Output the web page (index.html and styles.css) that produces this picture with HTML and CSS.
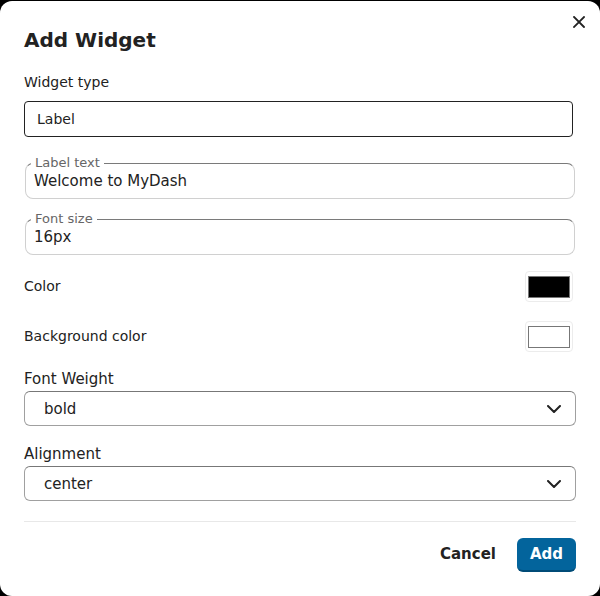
FILE: index.html
```html
<!DOCTYPE html>
<html lang="en">
<head>
<meta charset="utf-8">
<title>Add Widget</title>
<link rel="stylesheet" href="styles.css">
</head>
<body>
<div class="dialog" role="dialog" aria-labelledby="dlg-title">
  <button class="close" aria-label="Close">
    <svg width="12" height="12" viewBox="0 0 12 12"><path d="M1 1 L11 11 M11 1 L1 11" stroke="#222" stroke-width="1.8" stroke-linecap="square" fill="none"/></svg>
  </button>
  <h2 class="title" id="dlg-title">Add Widget</h2>
  <div class="form">
    <div class="field-label">Widget type</div>
    <div class="type-box">Label</div>

    <fieldset class="outlined first">
      <legend>Label text</legend>
      <input class="outlined-input" type="text" value="Welcome to MyDash">
    </fieldset>

    <fieldset class="outlined second">
      <legend>Font size</legend>
      <input class="outlined-input" type="text" value="16px">
    </fieldset>

    <div class="color-row first-color">
      <span class="row-label">Color</span>
      <span class="swatch-box"><span class="swatch swatch-black"></span></span>
    </div>
    <div class="color-row second-color">
      <span class="row-label">Background color</span>
      <span class="swatch-box"><span class="swatch swatch-white"></span></span>
    </div>

    <div class="group first-group">
      <div class="group-label">Font Weight</div>
      <div class="select">
        <span>bold</span>
        <svg width="14" height="8" viewBox="0 0 14 8"><path d="M1 1 L7 7 L13 1" stroke="#222" stroke-width="2" fill="none" stroke-linecap="round" stroke-linejoin="round"/></svg>
      </div>
    </div>
    <div class="group second-group">
      <div class="group-label">Alignment</div>
      <div class="select">
        <span>center</span>
        <svg width="14" height="8" viewBox="0 0 14 8"><path d="M1 1 L7 7 L13 1" stroke="#222" stroke-width="2" fill="none" stroke-linecap="round" stroke-linejoin="round"/></svg>
      </div>
    </div>
  </div>
  <div class="footer">
    <button class="btn btn-cancel">Cancel</button>
    <button class="btn btn-add">Add</button>
  </div>
</div>
</body>
</html>
```

FILE: styles.css
```css
* { box-sizing: border-box; }
html, body {
  margin: 0;
  padding: 0;
  background: #000;
  height: 596px;
  overflow: hidden;
}
body {
  font-family: "DejaVu Sans", "Liberation Sans", sans-serif;
  color: #222;
}
.dialog {
  position: relative;
  margin-top: 1px;
  height: 595px;
  background: #fff;
  border-radius: 12px;
  padding: 27px 24px 0 24px;
  display: flex;
  flex-direction: column;
}
.close {
  position: absolute;
  top: 15px;
  right: 15px;
  width: 12px;
  height: 12px;
  padding: 0;
  border: none;
  background: none;
  display: flex;
}
.title {
  margin: 0;
  font-size: 20px;
  line-height: 24px;
  font-weight: bold;
  color: #222;
}
.form {
  display: flex;
  flex-direction: column;
}
.field-label {
  margin-top: 20px;
  font-size: 14px;
  line-height: 20px;
  color: #222;
}
.type-box {
  margin-top: 9px;
  width: 549px;
  height: 36px;
  border: 1px solid #222;
  border-radius: 4px;
  padding: 0 12px;
  display: flex;
  align-items: center;
  font-size: 14px;
  color: #222;
}
.outlined {
  margin: 0 1px 0 1px;
  width: 550px;
  padding: 0 8px 6px 8px;
  border: 1px solid #d0d0d0;
  border-top-color: #7a7a7a;
  border-radius: 8px;
  min-width: 0;
}
.outlined.first { margin-top: 19px; }
.outlined.second { margin-top: 13px; }
.outlined legend {
  padding: 0 4px;
  margin-left: -3px;
  font-size: 13px;
  line-height: 14px;
  color: #666;
}
.outlined-input {
  display: block;
  width: 100%;
  height: 22px;
  border: none;
  padding: 0;
  margin: 0;
  outline: none;
  font-family: "DejaVu Sans", "Liberation Sans", sans-serif;
  font-size: 15px;
  color: #222;
  background: transparent;
}
.color-row {
  display: flex;
  align-items: center;
  justify-content: space-between;
  height: 31px;
  padding-right: 3px;
}
.color-row.first-color { margin-top: 16px; }
.color-row.second-color { margin-top: 19px; }
.row-label {
  font-size: 14px;
  line-height: 20px;
  padding-bottom: 2px;
  color: #222;
}
.swatch-box {
  width: 48px;
  height: 31px;
  border: 1px solid #ececec;
  border-radius: 4px;
  display: flex;
  align-items: center;
  justify-content: center;
}
.swatch {
  width: 42px;
  height: 22px;
  border: 1px solid #777;
}
.swatch-black { background: #000; }
.swatch-white { background: #fff; }
.group {
  display: flex;
  flex-direction: column;
}
.first-group { margin-top: 18px; }
.second-group { margin-top: 19px; }
.group-label {
  font-size: 15px;
  line-height: 19px;
  margin-bottom: 2px;
  color: #222;
}
.select {
  height: 35px;
  border: 1px solid #a0a0a0;
  border-top-color: #777;
  border-radius: 6px;
  padding: 0 14px 0 19px;
  display: flex;
  align-items: center;
  justify-content: space-between;
  font-size: 15px;
  color: #222;
}
.footer {
  margin-top: 20px;
  border-top: 1px solid #e8e8e8;
  padding-top: 16px;
  display: flex;
  justify-content: flex-end;
  gap: 9px;
}
.btn {
  font-family: "DejaVu Sans", "Liberation Sans", sans-serif;
  font-size: 15px;
  font-weight: bold;
  height: 34px;
  border-radius: 6px;
  cursor: pointer;
}
.btn-cancel {
  background: none;
  border: none;
  padding: 0 12px 2px 12px;
  color: #222;
}
.btn-add {
  background: #03649c;
  color: #fff;
  border: none;
  border-bottom: 2px solid #004b77;
  padding: 0 13px;
  width: 59px;
}
```
